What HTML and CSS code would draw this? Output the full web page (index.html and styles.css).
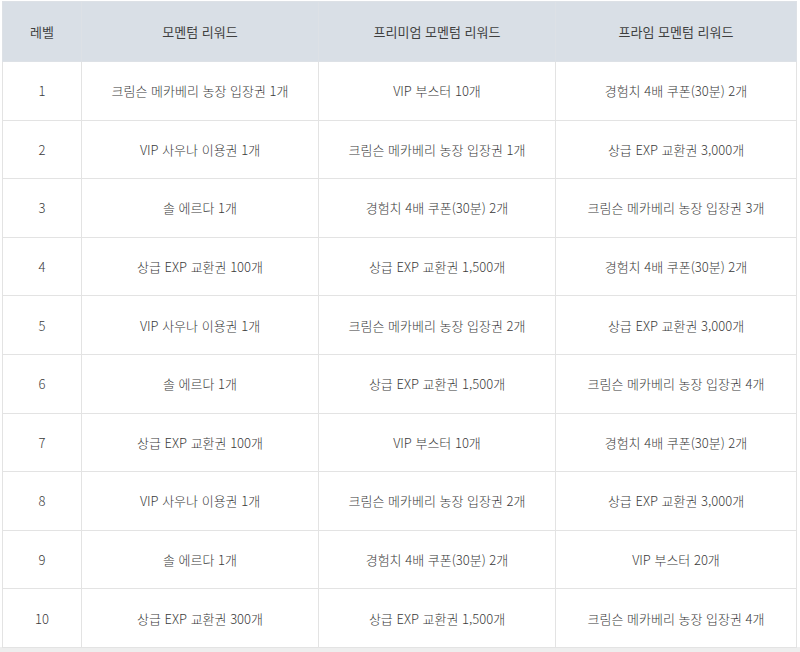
FILE: index.html
```html
<!DOCTYPE html>
<html lang="ko">
<head>
<meta charset="utf-8">
<link rel="stylesheet" href="styles.css">
</head>
<body>
<div class="wrap">
<table class="reward">
  <colgroup>
    <col class="c-lv"><col class="c-a"><col class="c-b"><col class="c-c">
  </colgroup>
  <thead>
    <tr><th>레벨</th><th>모멘텀 리워드</th><th>프리미엄 모멘텀 리워드</th><th>프라임 모멘텀 리워드</th></tr>
  </thead>
  <tbody>
    <tr><td>1</td><td>크림슨 메카베리 농장 입장권 1개</td><td>VIP 부스터 10개</td><td>경험치 4배 쿠폰(30분) 2개</td></tr>
    <tr><td>2</td><td>VIP 사우나 이용권 1개</td><td>크림슨 메카베리 농장 입장권 1개</td><td>상급 EXP 교환권 3,000개</td></tr>
    <tr><td>3</td><td>솔 에르다 1개</td><td>경험치 4배 쿠폰(30분) 2개</td><td>크림슨 메카베리 농장 입장권 3개</td></tr>
    <tr><td>4</td><td>상급 EXP 교환권 100개</td><td>상급 EXP 교환권 1,500개</td><td>경험치 4배 쿠폰(30분) 2개</td></tr>
    <tr><td>5</td><td>VIP 사우나 이용권 1개</td><td>크림슨 메카베리 농장 입장권 2개</td><td>상급 EXP 교환권 3,000개</td></tr>
    <tr><td>6</td><td>솔 에르다 1개</td><td>상급 EXP 교환권 1,500개</td><td>크림슨 메카베리 농장 입장권 4개</td></tr>
    <tr><td>7</td><td>상급 EXP 교환권 100개</td><td>VIP 부스터 10개</td><td>경험치 4배 쿠폰(30분) 2개</td></tr>
    <tr><td>8</td><td>VIP 사우나 이용권 1개</td><td>크림슨 메카베리 농장 입장권 2개</td><td>상급 EXP 교환권 3,000개</td></tr>
    <tr><td>9</td><td>솔 에르다 1개</td><td>경험치 4배 쿠폰(30분) 2개</td><td>VIP 부스터 20개</td></tr>
    <tr><td>10</td><td>상급 EXP 교환권 300개</td><td>상급 EXP 교환권 1,500개</td><td>크림슨 메카베리 농장 입장권 4개</td></tr>
  </tbody>
</table>
</div>
</body>
</html>
```
FILE: styles.css
```css
html, body {
  margin: 0;
  padding: 0;
  background: #ffffff;
}
body {
  font-family: "Noto Sans CJK KR", "Noto Sans", sans-serif;
  color: #444;
}
.wrap {
  padding: 1px 4px 0 2px;
  height: 652px;
  box-sizing: border-box;
  border-bottom: 5px solid #eeeeee;
}
.reward {
  width: 794px;
  border-collapse: collapse;
  table-layout: fixed;
  font-size: 13px;
}
.c-lv { width: 79px; }
.c-a { width: 237px; }
.c-b { width: 237px; }
.c-c { width: 241px; }
.reward th, .reward td {
  border: 1px solid #e3e3e3;
  text-align: center;
  vertical-align: middle;
  padding: 0;
}
.reward th {
  background: #d9dfe6;
  height: 59px;
  font-weight: 400;
  color: #3f3f3f;
  border-color: #dde1e6;
}
.reward td {
  height: 57.6px;
  font-weight: 300;
  color: #3a3a3a;
}
```
